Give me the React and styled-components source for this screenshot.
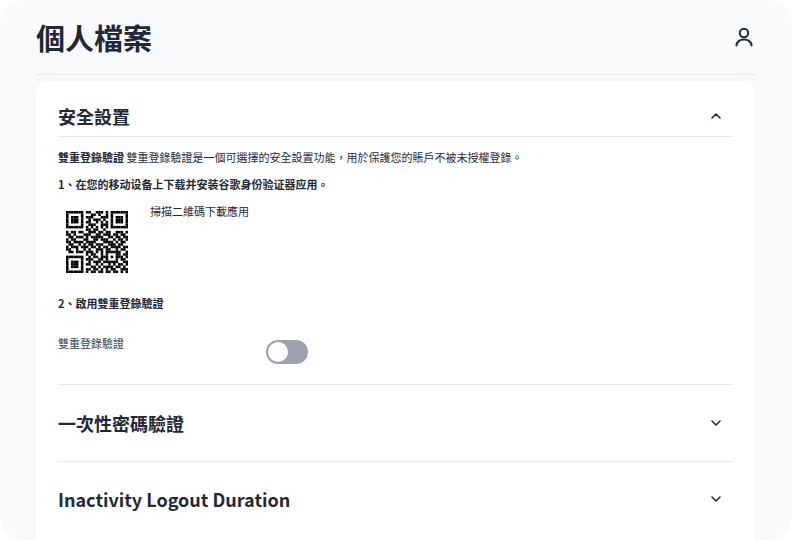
import React from 'react'
import styled, { createGlobalStyle } from 'styled-components'
import { ChevronDown, ChevronUp } from 'lucide-react'

const GlobalStyle = createGlobalStyle`
  html, body {
    margin: 0;
    padding: 0;
    height: 540px;
    overflow: hidden;
    background: #ffffff;
  }
  body {
    font-family: "Noto Sans CJK TC", "Noto Sans", sans-serif;
    color: #1f2937;
  }
`

const QR_ROWS = [
  '1111111011001110101111111',
  '1000001000110100101000001',
  '1011101011100011101011101',
  '1011101001011101001011101',
  '1011101011001010101011101',
  '1000001001110011101000001',
  '1111111010101010101111111',
  '0000000011011001000000000',
  '1011011001110110110011101',
  '1101000111001101110110110',
  '0110111010111110011011011',
  '1011000110011011100101101',
  '1101111011110001111010110',
  '0110010101101110011101100',
  '1011101110110101101111011',
  '1100100101001110110010110',
  '0110111011101010111111001',
  '0000000010110010100011011',
  '1111111001011011101011101',
  '1000001011100110100010110',
  '1011101001011101111110011',
  '1011101011001010010101101',
  '1011101000110101111011010',
  '1000001011011010101100111',
  '1111111010110110110110101',
]

function QrCode() {
  return (
    <QrSvg viewBox="0 0 25 25" aria-label="QR code">
      {QR_ROWS.map((row, y) =>
        row.split('').map((cell, x) =>
          cell === '1' ? <rect key={`${x}-${y}`} x={x} y={y} width="1.02" height="1.02" fill="#000" /> : null
        )
      )}
    </QrSvg>
  )
}

function App() {
  return (
    <>
      <GlobalStyle />
      <Page>
        <Header>
          <Title>個人檔案</Title>
          <UserIcon viewBox="0 0 24 24">
            <circle cx="12" cy="8" r="4.2" />
            <path d="M4.5 20.5c0-3.6 3.3-6 7.5-6s7.5 2.4 7.5 6" />
          </UserIcon>
        </Header>
        <Card>
          <OpenSection>
            <SectionHead>
              <SectionTitle>安全設置</SectionTitle>
              <ChevronUp size={16} strokeWidth={2.4} color="#1f2937" />
            </SectionHead>
            <Body>
              <Line><strong>雙重登錄驗證</strong> 雙重登錄驗證是一個可選擇的安全設置功能，用於保護您的賬戶不被未授權登錄。</Line>
              <Step>1、在您的移动设备上下载并安装谷歌身份验证器应用。</Step>
              <QrRow>
                <QrCode />
                <Small>掃描二維碼下載應用</Small>
              </QrRow>
              <Step>2、啟用雙重登錄驗證</Step>
              <ToggleRow>
                <ToggleLabel>雙重登錄驗證</ToggleLabel>
                <Toggle><Knob /></Toggle>
              </ToggleRow>
            </Body>
          </OpenSection>
          <ClosedSection>
            <SectionTitle>一次性密碼驗證</SectionTitle>
            <ChevronDown size={16} strokeWidth={2.4} color="#1f2937" />
          </ClosedSection>
          <ClosedSection $last>
            <SectionTitle>Inactivity Logout Duration</SectionTitle>
            <ChevronDown size={16} strokeWidth={2.4} color="#1f2937" />
          </ClosedSection>
        </Card>
      </Page>
    </>
  )
}

export default App

const Page = styled.div`
  box-sizing: border-box;
  width: 792px;
  height: 540px;
  padding: 0 37px 0 36px;
  background: #f9fafb;
  border-radius: 24px;
  overflow: hidden;
`

const Header = styled.header`
  box-sizing: border-box;
  height: 75px;
  display: flex;
  align-items: center;
  justify-content: space-between;
  border-bottom: 1px solid #e5e7eb;
`

const UserIcon = styled.svg`
  width: 24px;
  height: 24px;
  margin-right: -1px;
  fill: none;
  stroke: #1f2937;
  stroke-width: 2;
  stroke-linecap: round;
`

const Title = styled.h1`
  margin: 0;
  font-size: 29px;
  line-height: 38px;
  font-weight: 700;
  color: #1f2937;
`

const Card = styled.main`
  box-sizing: border-box;
  margin-top: 6px;
  padding: 0 22px;
  background: #ffffff;
  border-radius: 12px 12px 0 0;
  height: 480px;
  box-shadow: 0 0 10px rgba(17, 24, 39, 0.03);
`

const OpenSection = styled.section`
  border-bottom: 1px solid #e5e7eb;
  padding-bottom: 20px;
`

const SectionHead = styled.div`
  box-sizing: border-box;
  height: 56px;
  display: flex;
  align-items: center;
  justify-content: space-between;
  padding: 14px 9px 0 0;
  border-bottom: 1px solid #e5e7eb;
`

const SectionTitle = styled.h2`
  margin: 0;
  font-size: 18px;
  line-height: 28px;
  font-weight: 700;
  color: #1f2937;
`

const Body = styled.div`
  font-size: 11px;
  line-height: 16px;
  color: #1f2937;
  padding-top: 12px;
  strong {
    font-weight: 700;
  }
`

const Line = styled.p`
  margin: 0;
`

const Step = styled.p`
  margin: 11px 0 0;
  font-weight: 700;
`

const QrRow = styled.div`
  display: flex;
  align-items: flex-start;
  gap: 22px;
  margin-top: 19px;
  padding-left: 8px;
  height: 73px;
`

const QrSvg = styled.svg`
  width: 62px;
  height: 62px;
  display: block;
`

const Small = styled.span`
  line-height: 16px;
  margin-top: -8px;
`

const ToggleRow = styled.div`
  display: flex;
  align-items: flex-start;
  margin-top: 29px;
  height: 24px;
`

const ToggleLabel = styled.span`
  width: 208px;
  line-height: 16px;
  margin-top: -5px;
  color: #374151;
`

const Toggle = styled.div`
  box-sizing: border-box;
  width: 42px;
  height: 24px;
  padding: 2px;
  border-radius: 12px;
  background: #9ca3af;
`

const Knob = styled.div`
  width: 20px;
  height: 20px;
  border-radius: 50%;
  background: #ffffff;
`

const ClosedSection = styled.section`
  box-sizing: border-box;
  height: ${(p) => (p.$last ? '73px' : '77px')};
  display: flex;
  align-items: center;
  justify-content: space-between;
  padding-right: 9px;
  border-bottom: ${(p) => (p.$last ? 'none' : '1px solid #e5e7eb')};
`
